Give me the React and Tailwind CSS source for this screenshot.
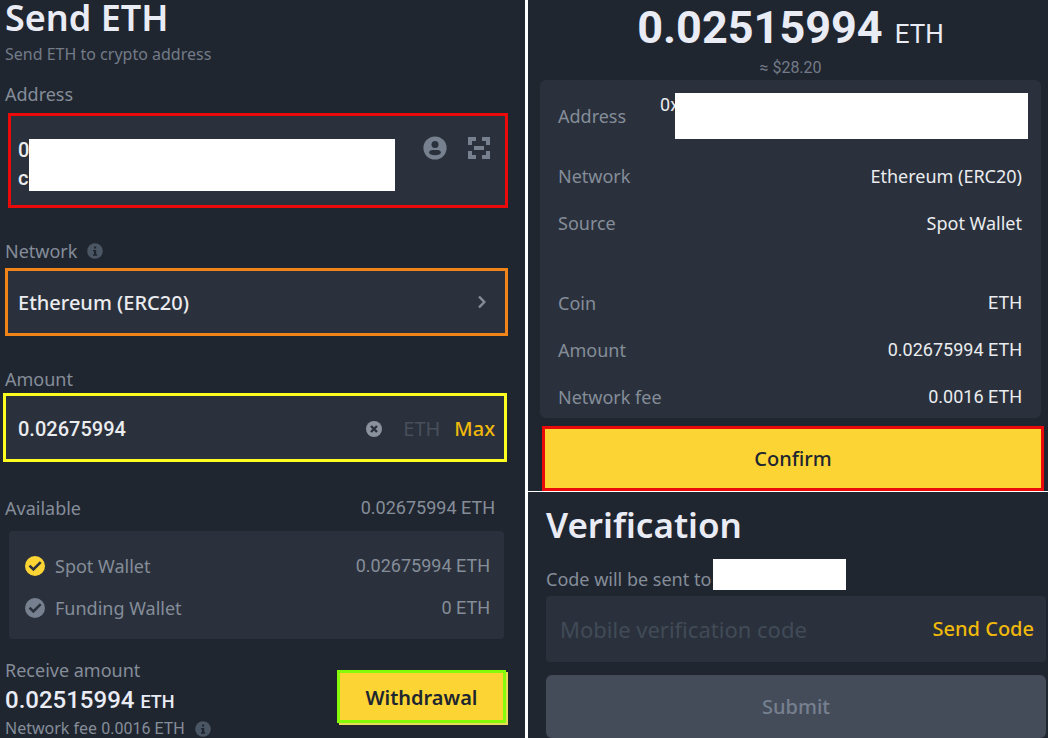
import { useState } from 'react';

const InfoIcon = () => (
  <svg viewBox="0 0 16 16" className="h-4 w-4 shrink-0" aria-hidden="true">
    <circle cx="8" cy="8" r="7.8" fill="#4a5663" />
    <path d="M7 3.4h2.2v2.2H7zM6 7h3.2v4.2h1v1.5H6v-1.5h1V8.5H6z" fill="#202630" />
  </svg>
);

const ContactIcon = () => (
  <svg viewBox="0 0 24 24" className="h-6 w-6" aria-hidden="true">
    <circle cx="12" cy="12" r="11.6" fill="#76808f" />
    <circle cx="12" cy="8.6" r="3.5" fill="#2a313c" />
    <path d="M9.5 14h5c2 0 3.400 1 3.400 2.400 0 1.500-2.300 2.800-5.900 2.800s-5.900-1.300-5.900-2.800c0-1.400 1.400-2.400 3.400-2.400z" fill="#2a313c" />
  </svg>
);

const ScanIcon = () => (
  <svg viewBox="0 0 22 22" className="h-[22px] w-[22px]" fill="none" stroke="#76808f" strokeWidth="4" aria-hidden="true">
    <path d="M2 8V2h6M14 2h6v6M20 14v6h-6M8 20H2v-6M6 11h10" />
  </svg>
);

const ClearIcon = () => (
  <svg viewBox="0 0 16 16" className="h-4 w-4" aria-hidden="true">
    <circle cx="8" cy="8" r="8" fill="#8a929e" />
    <path d="M5 5l6 6M11 5l-6 6" stroke="#2a313c" strokeWidth="2.400" />
  </svg>
);

const WalletRow = ({ id, name, balance, color }) => (
  <div className="flex items-center justify-between">
    <div className="flex items-center gap-2.5">
      <span className="grid h-5 w-5 place-items-center">
        <input id={id} type="checkbox" defaultChecked className={`col-start-1 row-start-1 h-5 w-5 appearance-none rounded-full ${color}`} />
        <svg viewBox="0 0 20 20" className="pointer-events-none col-start-1 row-start-1 h-5 w-5" fill="none" stroke="#2a313c" strokeWidth="2.600" aria-hidden="true">
          <path d="M4.500 9.600l3.900 3.800 7.300-7.300" />
        </svg>
      </span>
      <label htmlFor={id}>{name}</label>
    </div>
    <span className="font-[Roboto,sans-serif]">{balance}</span>
  </div>
);

const Detail = ({ label, value, font = '' }) => (
  <div className="flex items-center justify-between">
    <dt className="text-[#858d99]">{label}</dt>
    <dd className={`text-[#eaecef] ${font}`}>{value}</dd>
  </div>
);

const SendPanel = () => {
  const [amount, setAmount] = useState('0.02675994');

  return (
    <section className="pr-[17px] pl-[5px] text-lg leading-6 text-[#858d99]">
      <h1 className="text-4xl leading-9 font-semibold text-[#eaecf5]">Send ETH</h1>
      <p className="mt-1.5 text-base leading-6 text-[#737b88]">Send ETH to crypto address</p>

      <label htmlFor="address" className="mt-4 block">Address</label>
      <div className="mt-[7px] ml-[3px] flex h-[95px] items-start border-3 border-[#ea0a0a] bg-[#2a313c] pt-5 pr-[15px] pl-[7px]">
        <textarea id="address" defaultValue={'0\nc'} className="h-14 w-[11px] resize-none overflow-hidden font-[Roboto,sans-serif] text-xl leading-7 font-medium text-[#eaecef] outline-none" />
        <div className="mt-[3px] h-[52px] grow bg-white" />
        <div className="ml-7 flex items-center gap-[21px]">
          <button type="button" aria-label="Address book"><ContactIcon /></button>
          <button type="button" aria-label="Scan QR code"><ScanIcon /></button>
        </div>
      </div>

      <div className="mt-[31px] flex items-center gap-2.5">
        <span id="network-label">Network</span>
        <InfoIcon />
      </div>
      <button type="button" aria-describedby="network-label" className="mt-[5px] flex h-[68px] w-full items-center justify-between border-3 border-[#f08418] bg-[#2a313c] pr-[19px] pl-2.5 text-xl font-medium text-[#eaecef]">
        <span className="pt-0.5">Ethereum (ERC20)</span>
        <svg viewBox="0 0 8 14" className="h-3.5 w-2" fill="none" stroke="#858d99" strokeWidth="2.400" aria-hidden="true">
          <path d="M1 1.500L6.300 7 1 12.500" />
        </svg>
      </button>

      <label htmlFor="amount" className="mt-[31px] block">Amount</label>
      <div className="mt-0.5 mr-px -ml-0.5 flex h-[69px] items-center border-3 border-[#fdfd20] bg-[#2a313c] pt-0.5 pr-[9px] pl-3 text-xl">
        <input id="amount" value={amount} onChange={(e) => setAmount(e.target.value)} className="min-w-0 grow font-[Roboto,sans-serif] font-medium text-[#eaecef] outline-none" />
        <button type="button" aria-label="Clear amount" onClick={() => setAmount('')}><ClearIcon /></button>
        <span className="ml-[21px] text-[#474f5b]">ETH</span>
        <button type="button" onClick={() => setAmount('0.02675994')} className="ml-3.5 font-medium text-[#f0b90b]">Max</button>
      </div>

      <div className="mt-[34px] mr-[13px] flex items-center justify-between">
        <span>Available</span>
        <span className="font-[Roboto,sans-serif]">0.02675994 ETH</span>
      </div>
      <div className="mt-[11px] mr-1 ml-1 flex flex-col gap-[18px] rounded bg-[#2a313c] pt-[23px] pr-3.5 pb-[19px] pl-4">
        <WalletRow id="spot" name="Spot Wallet" balance="0.02675994 ETH" color="bg-[#fcd535]" />
        <WalletRow id="funding" name="Funding Wallet" balance="0 ETH" color="bg-[#76808f]" />
      </div>

      <div className="mt-[19px] flex items-start justify-between">
        <div>
          <div>Receive amount</div>
          <div className="mt-0.5 font-[Roboto,sans-serif] text-2xl leading-8 font-medium text-[#eaecf5]">
            0.02515994 <span className="text-lg leading-8">ETH</span>
          </div>
          <div className="flex items-center gap-2.5 text-base leading-5">
            <span>Network fee <span className="font-[Roboto,sans-serif]">0.0016 ETH</span></span>
            <InfoIcon />
          </div>
        </div>
        <button type="button" className="mt-3 mr-0.5 h-[53px] w-[169px] border-3 border-[#86fb09] bg-[#fcd535] pt-0.5 text-xl font-semibold text-[#202630] shadow-[2px_2px_0_#e6dc55]">
          Withdrawal
        </button>
      </div>
    </section>
  );
};

const ConfirmPanel = () => (
  <section className="pr-[7px] pl-3 text-lg leading-6">
    <div className="flex items-baseline justify-center gap-3 font-[Roboto,sans-serif] text-[#eaecf5]">
      <span className="text-[45px] leading-14 font-bold">0.02515994</span>
      <span className="text-[26px] leading-8">ETH</span>
    </div>
    <p className="text-center font-[Roboto,sans-serif] text-base leading-6 text-[#737b88]">≈ $28.20</p>

    <dl className="flex flex-col gap-[23px] rounded-md bg-[#2a313c] pt-[13px] pr-[19px] pb-[9px] pl-[18px]">
      <div className="mb-0.5 flex h-[46px] items-center">
        <dt className="w-[22%] text-[#858d99]">Address</dt>
        <dd className="-mr-1.5 flex grow self-stretch">
          <span className="w-[15px] font-[Roboto,sans-serif] text-[#eaecef]">0x</span>
          <span className="relative grow bg-white" />
        </dd>
      </div>
      <Detail label="Network" value="Ethereum (ERC20)" />
      <Detail label="Source" value="Spot Wallet" />
      <div className="mt-[33px] flex flex-col gap-[23px]">
        <Detail label="Coin" value="ETH" font="font-[Roboto,sans-serif]" />
        <Detail label="Amount" value="0.02675994 ETH" font="font-[Roboto,sans-serif]" />
        <Detail label="Network fee" value="0.0016 ETH" font="font-[Roboto,sans-serif]" />
      </div>
    </dl>

    <button type="button" className="mt-2 ml-0.5 block h-[65px] w-[calc(100%+1px)] border-3 border-[#ea0a0a] bg-[#fcd535] text-xl font-medium text-[#202630]">
      Confirm
    </button>
  </section>
);

const VerificationPanel = () => (
  <section className="border-t border-white pr-0.5 pl-[18px] text-lg leading-6">
    <h2 className="mt-[13px] text-[35px] leading-10 font-semibold text-[#eaecf5]">Verification</h2>
    <div className="mt-3.5 flex h-[31px] text-[#858d99]">
      <span className="w-[167px] pt-2 whitespace-nowrap">Code will be sent to</span>
      <span className="w-[133px] bg-white" />
    </div>
    <div className="mt-1.5 flex h-[66px] items-center rounded bg-[#2a313c] pr-3 pl-3.5">
      <input aria-label="Mobile verification code" placeholder="Mobile verification code" className="min-w-0 grow text-[22px] text-[#eaecef] outline-none placeholder:text-[#414b57]" />
      <button type="button" className="shrink-0 text-xl font-medium text-[#f0b90b]">Send Code</button>
    </div>
    <button type="button" className="mt-[13px] block h-[63px] w-full rounded-md bg-[#444c5a] text-xl font-medium text-[#76808f]">
      Submit
    </button>
  </section>
);

const App = () => (
  <main className="grid min-h-screen grid-cols-[525fr_523fr] bg-[#202630] font-['Noto_Sans',sans-serif]">
    <SendPanel />
    <div className="border-l-3 border-white">
      <ConfirmPanel />
      <VerificationPanel />
    </div>
  </main>
);

export default App;
